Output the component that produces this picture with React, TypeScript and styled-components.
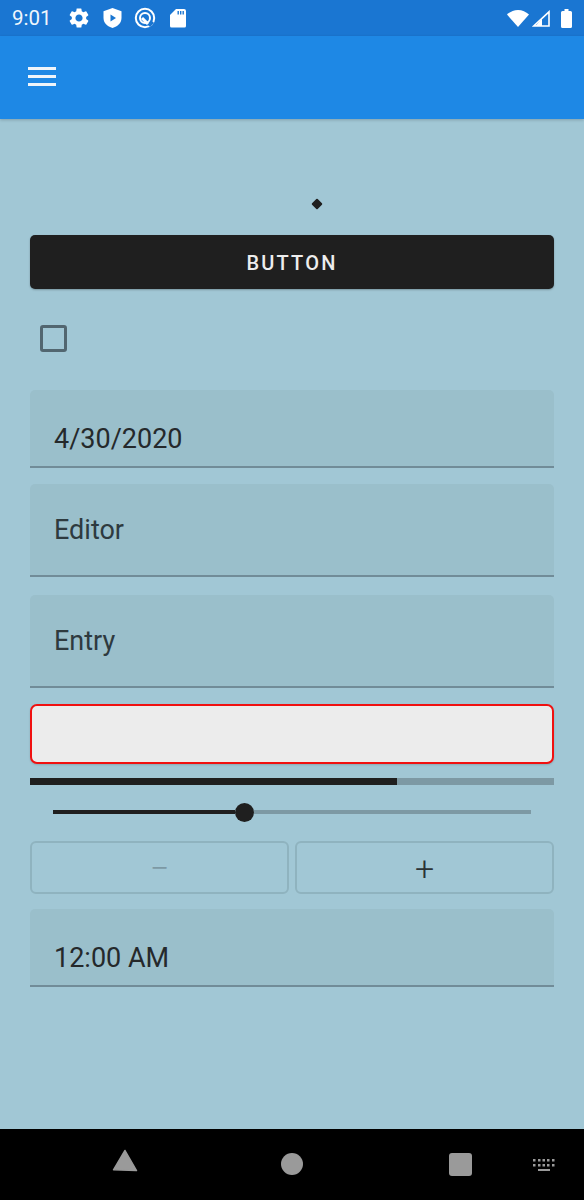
import React from "react";
import styled, { createGlobalStyle } from "styled-components";
import { MdSettings } from "react-icons/md";

const GlobalStyle = createGlobalStyle`
  html, body {
    margin: 0;
    padding: 0;
    background: #a1c7d5;
  }
  * {
    box-sizing: border-box;
  }
`;

const App = () => (
  <>
    <GlobalStyle />
    <Screen>
      <StatusBar>
        <Clock>9:01</Clock>
        <StatusIcons>
          <MdSettings size={24} color="#fff" />
          <svg width="19" height="20" viewBox="0 0 19 20">
            <path d="M9.5 0l9 3.200v6.800c0 4.800-3.800 8.600-9 10-5.200-1.400-9-5.200-9-10V3.200z" fill="#fff" />
            <path d="M7.500 6.500L13 10l-5.500 3.500z" fill="#1a76d2" />
          </svg>
          <svg width="22" height="22" viewBox="0 0 22 22" fill="none" stroke="#fff">
            <circle cx="11" cy="11" r="9.200" strokeWidth="2" />
            <circle cx="11" cy="11" r="5" strokeWidth="2" />
            <path d="M15 19l4-4" stroke="#1a76d2" strokeWidth="3" />
            <path d="M8 11l6 6" strokeWidth="3" />
          </svg>
          <svg width="20" height="20" viewBox="0 0 20 20">
            <path d="M8 1h8a2 2 0 0 1 2 2v15a1.500 1.500 0 0 1-1.500 1.500h-13A1.500 1.500 0 0 1 2 18V7z" fill="#fff" />
            <path d="M9.500 3h1.400v3.500H9.500zM12 3h1.400v3.500H12zM14.500 3h1.400v3.500h-1.400z" fill="#1a76d2" />
          </svg>
        </StatusIcons>
        <SystemIcons>
          <svg width="22" height="17" viewBox="0 0 22 17">
            <path d="M0 4.500C3 1.800 6.800 0 11 0s8 1.800 11 4.500L11 17z" fill="#fff" />
          </svg>
          <svg width="18" height="17" viewBox="0 0 18 17">
            <path d="M17 1.800V16H1.800z" fill="none" stroke="#fff" strokeWidth="1.600" />
            <path d="M10 8.500L3.500 16H10z" fill="#fff" />
          </svg>
          <svg width="11" height="19" viewBox="0 0 11 19">
            <path d="M3.500 0h4v2h2a1.500 1.500 0 0 1 1.500 1.500v14a1.500 1.500 0 0 1-1.500 1.500h-8A1.500 1.500 0 0 1 0 17.500v-14A1.500 1.500 0 0 1 1.500 2h2z" fill="#fff" />
          </svg>
        </SystemIcons>
      </StatusBar>
      <AppBar>
        <Burger>
          <span />
          <span />
          <span />
        </Burger>
      </AppBar>
      <Content>
        <ActivitySpot>
          <Diamond />
        </ActivitySpot>
        <PrimaryButton>BUTTON</PrimaryButton>
        <CheckRow>
          <CheckBox />
        </CheckRow>
        <FilledField $height={78} $gap={16} $value>4/30/2020</FilledField>
        <FilledField $height={93} $gap={18}>Editor</FilledField>
        <FilledField $height={93} $gap={16}>Entry</FilledField>
        <SearchBox />
        <ProgressTrack>
          <ProgressFill style={{ width: "70%" }} />
        </ProgressTrack>
        <SliderRow>
          <SliderDone />
          <SliderThumb />
          <SliderRest />
        </SliderRow>
        <StepperRow>
          <StepperButton $dim>−</StepperButton>
          <StepperButton>+</StepperButton>
        </StepperRow>
        <FilledField $height={78} $gap={0} $value>12:00 AM</FilledField>
      </Content>
      <NavBar>
        <BackSlot>
          <svg width="26" height="24" viewBox="0 0 26 24">
            <path d="M13 2.500L24.500 22.500 1.500 21.800z" fill="#9a9a9a" stroke="#9a9a9a" strokeLinejoin="round" strokeWidth="1.500" />
          </svg>
        </BackSlot>
        <NavCircle />
        <NavSquare />
        <KeyboardSlot>
          <svg width="24" height="14" viewBox="0 0 24 14" fill="#9a9a9a">
            <path d="M1 1h2.500v2.500H1zM6 1h2.500v2.500H6zM10.500 1H13v2.500h-2.500zM15 1h2.500v2.500H15zM20 1h2.500v2.500H20zM1 6h2.500v2.500H1zM6 6h2.500v2.500H6zM10.500 6H13v2.500h-2.500zM15 6h2.500v2.500H15zM20 6h2.500v2.500H20zM6 11h12v2H6z" />
          </svg>
        </KeyboardSlot>
      </NavBar>
    </Screen>
  </>
);

export default App;

const Screen = styled.div`
  width: 584px;
  height: 1200px;
  display: flex;
  flex-direction: column;
  background: #a1c7d5;
  font-family: Roboto, "Liberation Sans", sans-serif;
  overflow: hidden;
`;

const StatusBar = styled.div`
  height: 36px;
  flex: none;
  display: flex;
  align-items: center;
  padding: 0 12px;
  background: #1a76d2;
  color: #fff;
`;

const Clock = styled.span`
  width: 55px;
  font-size: 20.5px;
  color: #f0f6fc;
`;

const StatusIcons = styled.div`
  display: flex;
  align-items: center;
  gap: 12px;
  flex: 1;
`;

const SystemIcons = styled.div`
  display: flex;
  align-items: center;
  gap: 3px;

  svg:last-child {
    margin-left: 8px;
  }
`;

const AppBar = styled.div`
  height: 83px;
  flex: none;
  display: flex;
  align-items: center;
  padding: 0 0 2px 28px;
  background: #1e88e5;
  box-shadow: 0 1px 3px rgba(0, 0, 0, 0.2);
`;

const Burger = styled.div`
  display: flex;
  flex-direction: column;
  gap: 5px;

  span {
    display: block;
    width: 28px;
    height: 3px;
    background: #eef4fa;
  }
`;

const Content = styled.div`
  flex: 1;
  display: flex;
  flex-direction: column;
  padding: 0 30px;
`;

const ActivitySpot = styled.div`
  height: 116px;
  display: flex;
  justify-content: flex-end;
  align-items: flex-start;
  padding: 81px 233px 0 0;
`;

const Diamond = styled.div`
  width: 8px;
  height: 8px;
  border-radius: 1px;
  background: #1f1f1f;
  transform: rotate(45deg);
`;

const PrimaryButton = styled.div`
  height: 54px;
  display: flex;
  align-items: center;
  justify-content: center;
  padding-top: 2px;
  border-radius: 5px;
  background: #1f1f1f;
  color: #ededed;
  font-size: 20px;
  font-weight: 500;
  letter-spacing: 2.2px;
  box-shadow: 0 1px 2px rgba(0, 0, 0, 0.25);
`;

const CheckRow = styled.div`
  height: 101px;
  padding: 36px 0 0 10px;
`;

const CheckBox = styled.div`
  width: 27px;
  height: 27px;
  border: 3px solid #526670;
  border-radius: 3px;
`;

const FilledField = styled.div<{ $height: number; $gap: number; $value?: boolean }>`
  height: ${({ $height }) => $height}px;
  margin-bottom: ${({ $gap }) => $gap}px;
  flex: none;
  display: flex;
  align-items: ${({ $value }) => ($value ? "flex-end" : "center")};
  padding: 0 24px ${({ $value }) => ($value ? "11px" : "0")};
  border-bottom: 2px solid #718c98;
  border-radius: 5px 5px 0 0;
  background: #9abfcb;
  color: ${({ $value }) => ($value ? "#25292b" : "#2e3a3f")};
  font-size: 27px;
  line-height: 32px;
`;

const SearchBox = styled.div`
  height: 60px;
  flex: none;
  border: 2px solid #f01010;
  border-radius: 7px;
  background: #ececec;
  box-shadow: 0 1px 2px rgba(0, 0, 0, 0.15);
`;

const ProgressTrack = styled.div`
  height: 7px;
  margin-top: 14px;
  background: #7d99a4;
`;

const ProgressFill = styled.div`
  height: 100%;
  background: #1f1f1f;
`;

const SliderRow = styled.div`
  height: 20px;
  margin-top: 17px;
  padding: 0 23px;
  display: flex;
  align-items: center;
`;

const SliderDone = styled.div`
  width: 182px;
  height: 4px;
  background: #1f1f1f;
`;

const SliderThumb = styled.div`
  width: 19px;
  height: 19px;
  flex: none;
  border-radius: 50%;
  background: #1f1f1f;
`;

const SliderRest = styled.div`
  flex: 1;
  height: 4px;
  background: #7d99a4;
`;

const StepperRow = styled.div`
  display: grid;
  grid-template-columns: 1fr 1fr;
  gap: 6px;
  margin: 19px 0 15px;
`;

const StepperButton = styled.div<{ $dim?: boolean }>`
  height: 53px;
  display: flex;
  align-items: center;
  justify-content: center;
  border: 2px solid #8fb3bf;
  border-radius: 6px;
  color: ${({ $dim }) => ($dim ? "#7d99a4" : "#2b3336")};
  font-size: 34px;
  font-weight: 300;
`;

const NavBar = styled.div`
  height: 71px;
  flex: none;
  display: flex;
  align-items: center;
  padding-left: 112px;
  background: #000;
`;

const BackSlot = styled.div`
  display: flex;
  margin-bottom: 10px;
`;

const NavCircle = styled.div`
  width: 22px;
  height: 22px;
  margin: 0 0 1px 143px;
  border-radius: 50%;
  background: #9a9a9a;
`;

const NavSquare = styled.div`
  width: 23px;
  height: 23px;
  margin-left: 146px;
  border-radius: 3px;
  background: #9a9a9a;
`;

const KeyboardSlot = styled.div`
  display: flex;
  margin-left: 60px;
`;
